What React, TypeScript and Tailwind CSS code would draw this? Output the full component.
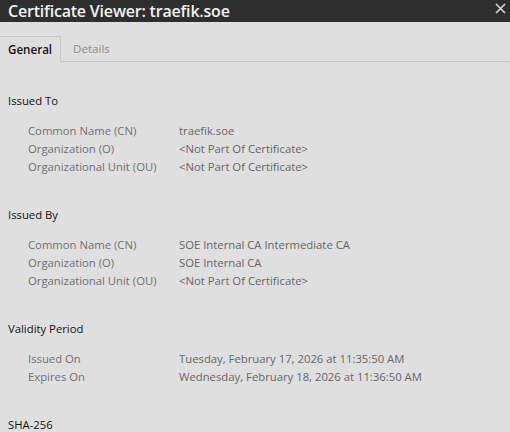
import React from "react";

const font = { fontFamily: '"Open Sans", "Noto Sans", sans-serif' };

function Row({ label, value }: { label: string; value: string }) {
  return (
    <div className="flex h-[18px] shrink-0 items-center text-[11.3px] leading-[18px]">
      <div className="w-[151px] shrink-0 text-[#6f6f6f]">{label}</div>
      <div className="text-[#666666] whitespace-nowrap">{value}</div>
    </div>
  );
}

function Section({ title, rows }: { title: string; rows: [string, string][] }) {
  return (
    <div className="flex shrink-0 flex-col">
      <div className="h-[18px] shrink-0 text-[11.3px] leading-[18px] text-[#111111]">{title}</div>
      <div className="mt-[12px] flex shrink-0 flex-col pl-[20px]">
        {rows.map(([l, v]) => (
          <Row key={l} label={l} value={v} />
        ))}
      </div>
    </div>
  );
}

export default function App() {
  return (
    <div className="w-[510px] h-[432px] overflow-hidden bg-[#dfdfdf] flex flex-col" style={font}>
      <div className="h-[22px] shrink-0 bg-[#2e2e2e] flex items-center justify-between pl-[8px] pr-[4px]">
        <span className="text-[16px] font-semibold text-[#f2f2f2] leading-[22px] tracking-[-0.2px]">
          Certificate Viewer: traefik.soe
        </span>
        <svg width="11" height="11" viewBox="0 0 11 11" className="mb-[6px]">
          <path d="M1 1 L10 10 M10 1 L1 10" stroke="#d8d8d8" strokeWidth="1.6" />
        </svg>
      </div>
      <div className="mt-[14px] flex h-[26px] shrink-0">
        <div className="w-[61px] border-t border-r border-[#c8c8c8] flex items-center pl-[8px] text-[11.6px] font-semibold text-[#111111]">
          General
        </div>
        <div className="flex-1 border-b border-[#c8c8c8] flex items-center pl-[12px] text-[11.6px] text-[#8a8a8a]">
          Details
        </div>
      </div>
      <div className="pl-[8px] pt-[30px] flex shrink-0 flex-col gap-[30px]">
        <Section
          title="Issued To"
          rows={[
            ["Common Name (CN)", "traefik.soe"],
            ["Organization (O)", "<Not Part Of Certificate>"],
            ["Organizational Unit (OU)", "<Not Part Of Certificate>"],
          ]}
        />
        <Section
          title="Issued By"
          rows={[
            ["Common Name (CN)", "SOE Internal CA Intermediate CA"],
            ["Organization (O)", "SOE Internal CA"],
            ["Organizational Unit (OU)", "<Not Part Of Certificate>"],
          ]}
        />
        <Section
          title="Validity Period"
          rows={[
            ["Issued On", "Tuesday, February 17, 2026 at 11:35:50 AM"],
            ["Expires On", "Wednesday, February 18, 2026 at 11:36:50 AM"],
          ]}
        />
        <div className="h-[18px] shrink-0 text-[11.3px] leading-[18px] text-[#111111]">SHA-256</div>
      </div>
    </div>
  );
}
